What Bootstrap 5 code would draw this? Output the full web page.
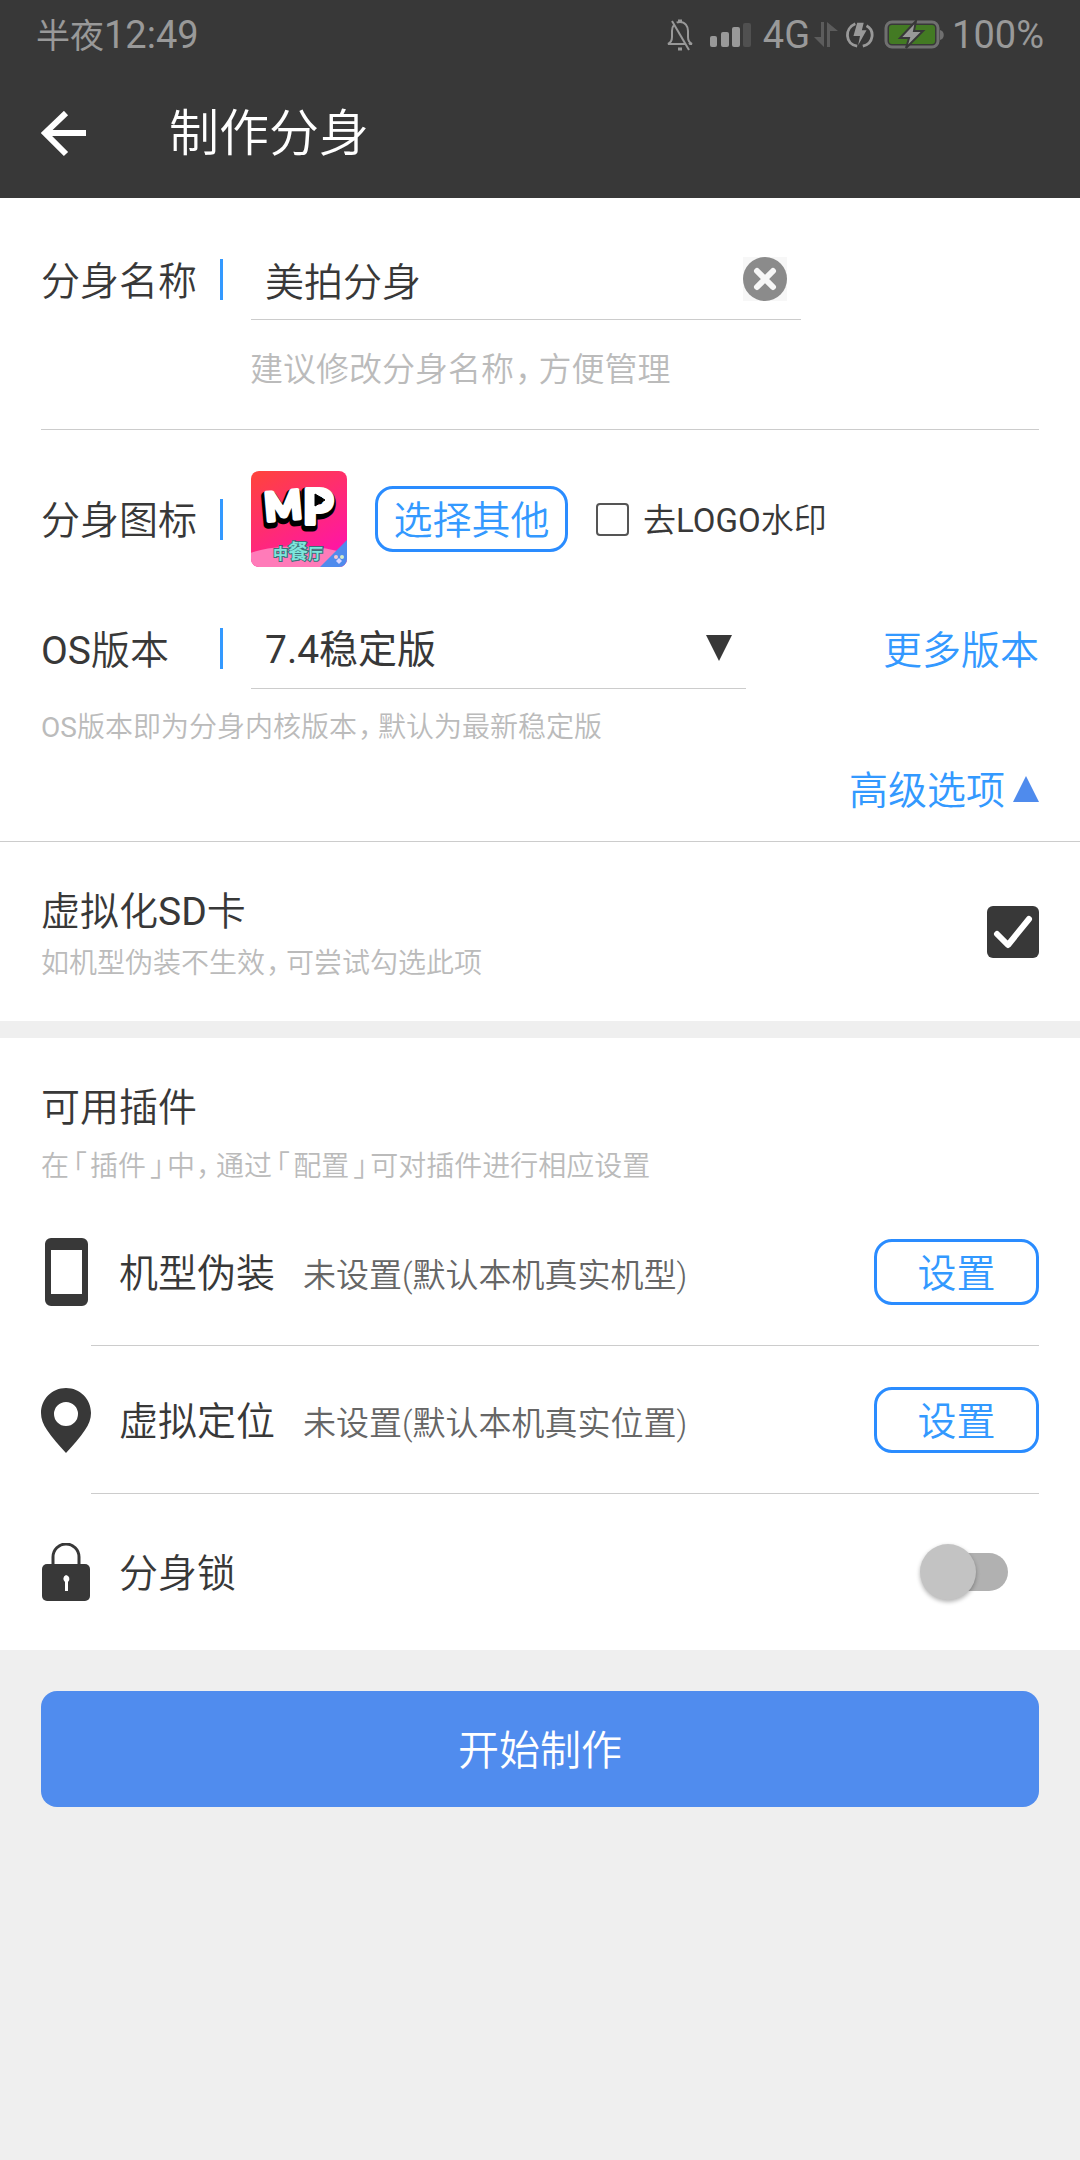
<!DOCTYPE html>
<html lang="zh-CN">
<head>
<meta charset="utf-8">
<meta name="viewport" content="width=device-width, initial-scale=1">
<title>制作分身</title>
<link href="https://cdn.jsdelivr.net/npm/bootstrap@5.3.0/dist/css/bootstrap.min.css" rel="stylesheet">
<style>
  :root { --ink: #383838; --line: #ccc; --muted-ink: #bbb; --sky: #3399ff; --edge: 41px; }
  body { background: #efefef; color: var(--ink); font-family: Roboto, "Noto Sans CJK SC", sans-serif; font-weight: 350; font-size: 39px; line-height: 46px; }
  svg { display: block; flex: none; }
  a { color: var(--sky); text-decoration: none; }
  .edge-x { padding-left: var(--edge); padding-right: var(--edge); }
  .lat { font-weight: 400; }

  .top-area { background: var(--ink); }
  .status-line { height: 70px; padding: 0 36px; color: #999; font-size: 38px; font-weight: 400; }
  .status-line .cjk { font-size: 34px; }
  .net-type { margin-left: 12px; }
  .app-bar { height: 128px; gap: 82px; }
  .app-bar h1 { font-size: 50px; font-weight: 350; line-height: 60px; color: #fff; }

  /* CJK glyphs ride high in a Roboto line box; row text is lowered to look centred */
  .row-text { padding-top: 4px; }
  .field-row { padding-top: var(--edge); }
  .field-label { flex: 0 0 182px; margin-right: 28px; display: flex; align-items: center; justify-content: space-between; }
  .field-label::after { content: ""; width: 3px; height: 41px; background: var(--sky); }
  .field-box { height: 81px; border-bottom: 1px solid var(--line); }
  .name-box { flex: 0 1 550px; padding-right: 14px; }
  .os-box { flex: 0 1 495px; }
  .field-box .form-control, .field-box .form-select { border: 0; border-radius: 0; box-shadow: none; background-color: transparent; color: var(--ink); font-size: 39px; line-height: 46px; padding: 0 14px 0 14px; height: 80px; }
  .field-box .form-control { font-weight: 350; }
  .field-box .form-select { padding-top: 4px; background-image: url("data:image/svg+xml,%3Csvg xmlns='http://www.w3.org/2000/svg' viewBox='0 0 26 26'%3E%3Cpath d='M0 0h26L13 26z' fill='%23383838'/%3E%3C/svg%3E"); background-size: 26px 26px; background-position: right 14px center; }
  .clear-btn { width: 44px; height: 44px; background: #f7f7f7; flex: none; }

  .hint { color: var(--muted-ink); font-size: 33px; line-height: 40px; margin-left: 209px; padding-top: 30px; padding-bottom: 39px; }
  .hint-sm { color: var(--muted-ink); font-size: 28px; line-height: 34px; }
  .comma, .brack { font-feature-settings: "halt"; }
  .comma { margin: 0 7px 0 1px; }
  .hint-sm .comma { margin-right: 6px; }
  .brack { margin: 0 3px 0 4px; }
  .rule { border-top: 1px solid var(--line); }

  .btn-line { --bs-btn-color: var(--sky); --bs-btn-border-color: #2a8cff; --bs-btn-hover-bg: #eaf4ff; --bs-btn-hover-color: var(--sky); --bs-btn-hover-border-color: #2a8cff; border-width: 3px; border-radius: 18px; height: 66px; padding: 4px 0 0; font-size: 39px; font-weight: 350; line-height: 46px; flex: none; }
  .btn-pick { width: 193px; margin: 0 28px; }
  .btn-set { width: 165px; }
  .form-check-input.box-sm, .form-check-input.box-lg { margin: 0; flex: none; }
  .form-check-input.box-sm { width: 33px; height: 33px; border: 2px solid #555; border-radius: 4px; }
  .pick-text { font-size: 33px; line-height: 40px; margin-left: 14px; padding-top: 4px; }
  .form-check-input.box-lg { width: 52px; height: 52px; border: 0; border-radius: 6px; }
  .form-check-input.box-lg:checked { background-color: var(--ink); background-size: 52px 52px; background-image: url("data:image/svg+xml,%3Csvg xmlns='http://www.w3.org/2000/svg' viewBox='0 0 52 52'%3E%3Cpath d='M10 28L21 39L42 13' fill='none' stroke='white' stroke-width='6' stroke-linecap='round' stroke-linejoin='round'/%3E%3C/svg%3E"); }

  .os-hint { padding-top: 22px; }
  .advanced { padding-top: 19px; padding-bottom: 27px; }
  .advanced svg { margin-left: 8px; }
  .sd-text { padding-top: 47px; padding-bottom: 40px; }
  .sd-hint { margin-top: 12px; }
  .band { height: 17px; background: #efefef; }
  .plug-head { padding-top: 47px; padding-bottom: 14px; }
  .plug-hint { margin-top: 19px; }
  .plug-icon { flex: 0 0 50px; }
  .plug-body { min-height: 148px; border-bottom: 1px solid var(--line); padding-left: 28px; }
  .plug-row:last-child .plug-body { min-height: 156px; border-bottom: 0; }
  .plug-note { font-size: 33px; line-height: 40px; color: #666; margin-left: 28px; padding-top: 8px; }
  .form-check-input.lock-switch { width: 78px; height: 38px; margin: 0 31px 0 0; border: 0; border-radius: 19px; background: #b1b1b1; flex: none; position: relative; }
  .lock-switch::before { content: ""; position: absolute; left: -10px; top: -9px; width: 56px; height: 56px; border-radius: 50%; background: #c3c3c3; box-shadow: 0 2px 4px rgba(0,0,0,.3); }
  .form-check-input.lock-switch:checked { background: #9cc4ff; }
  .lock-switch:checked::before { left: 32px; background: #508cee; }
  .start-area { padding-top: var(--edge); }
  .btn-start { --bs-btn-bg: #508cee; --bs-btn-color: #fff; --bs-btn-hover-bg: #437fe0; --bs-btn-hover-color: #fff; border: 0; border-radius: 16px; height: 116px; padding: 6px 0 0; font-size: 41px; font-weight: 350; }
</style>
</head>
<body>
<header class="top-area">
  <div class="status-line d-flex align-items-center justify-content-between">
    <div><span class="cjk">半夜</span>12:49</div>
    <div class="d-flex align-items-center">
      <svg width="28" height="32" viewBox="0 0 28 32" fill="none" stroke="#999" stroke-width="2" aria-hidden="true">
        <path d="M14 3c-5 0-8 4-8 9v6c0 4-2 6-4 7h24c-2-1-4-3-4-7v-6c0-5-3-9-8-9z"/><path d="M12 2h4M12 30h4" stroke-width="3"/><path d="M8 2l16 28" stroke="#383838" stroke-width="3"/><path d="M6 2l17 29"/>
      </svg>
      <svg class="ms-3" width="41" height="25" viewBox="0 0 41 25" fill="#999" aria-hidden="true">
        <rect y="13" width="7" height="11" rx="2"/><rect x="11" y="9" width="8" height="15" rx="2"/><rect x="22" y="4" width="8" height="20" rx="2"/><rect x="33" width="8" height="24" rx="2" fill="#505050"/>
      </svg>
      <span class="net-type">4G</span>
      <svg class="ms-1" width="24" height="26" viewBox="0 0 24 26" fill="#5c5c5c" aria-hidden="true">
        <path d="M7 0h3v25L0 15h7zM13 25h3V9h8L13 0z"/>
      </svg>
      <svg class="ms-2" width="28" height="28" viewBox="0 0 30 30" fill="none" stroke="#999" stroke-width="3" aria-hidden="true">
        <path d="M10 3C-2 8-1 25 12 27M18 27c12-3 13-17 4-22"/><path d="M12 2h7l-2 8h5L13 26l2-10H8z" fill="#999" stroke="none"/>
      </svg>
      <svg class="ms-2" width="62" height="30" viewBox="0 0 62 30" aria-hidden="true">
        <rect x="4" y="2" width="52" height="25" rx="6" fill="none" stroke="#707070" stroke-width="3"/><rect x="7" y="5" width="46" height="19" rx="3" fill="#437a23"/>
        <path d="M58 10c5 1 5 9 0 10z" fill="#707070"/>
        <path d="M34 1L18 18h9l-3 10 17-17h-9z" fill="#999" stroke="#383838" stroke-width="2"/>
      </svg>
      <span class="ms-2">100%</span>
    </div>
  </div>
  <nav class="app-bar edge-x d-flex align-items-center" aria-label="导航">
    <a href="#" aria-label="返回">
      <svg width="46" height="46" viewBox="0 0 46 46" fill="none" stroke="#fff" stroke-width="6"><path d="M25 2L4 22l21 21M4 22h41"/></svg>
    </a>
    <h1 class="m-0">制作分身</h1>
  </nav>
</header>

<main class="bg-white">
  <section class="edge-x">
    <div class="field-row d-flex align-items-center">
      <label class="field-label" for="clone-name"><span class="row-text">分身名称</span></label>
      <div class="field-box name-box d-flex align-items-center">
        <input class="form-control" type="text" id="clone-name" value="美拍分身">
        <button class="clear-btn btn p-0 border-0 rounded-0" type="button" aria-label="清除">
          <svg width="44" height="44" viewBox="0 0 44 44"><circle cx="22" cy="22" r="22" fill="#8b8b8b"/><path d="M14 14l16 16M30 14L14 30" stroke="#f7f7f7" stroke-width="6" stroke-linecap="round"/></svg>
        </button>
      </div>
    </div>
    <div class="hint">建议修改分身名称<span class="comma">，</span>方便管理</div>
    <div class="rule"></div>

    <div class="field-row d-flex align-items-center">
      <div class="field-label"><span class="row-text">分身图标</span></div>
      <svg width="96" height="96" viewBox="0 0 96 96" role="img" aria-label="美拍图标">
        <defs>
          <linearGradient id="tile" x1="0" y1="0" x2=".6" y2="1"><stop offset="0" stop-color="#ff443a"/><stop offset="1" stop-color="#ff16a4"/></linearGradient>
          <clipPath id="tile-shape"><rect width="96" height="96" rx="8"/></clipPath>
        </defs>
        <g clip-path="url(#tile-shape)">
          <rect width="96" height="96" fill="url(#tile)"/>
          <ellipse cx="46" cy="108" rx="76" ry="33" fill="#ff7bb9"/>
          <g font-family="Lato, sans-serif" font-weight="900" stroke-linejoin="round">
            <g fill="#000" stroke="#000" stroke-width="9">
              <text x="13" y="52" font-size="39" transform="rotate(-5 30 40)">M</text><text x="51" y="56" font-size="48">P</text>
            </g>
            <g fill="#fff" stroke="#fff" stroke-width="4">
              <text x="14" y="49" font-size="39" transform="rotate(-5 30 40)">M</text><text x="52" y="53" font-size="48">P</text>
            </g>
          </g>
          <path d="M64 23v12l10-6z" fill="#000" stroke="#000"/>
          <text x="22" y="88" font-family="Noto Sans CJK SC, sans-serif" font-weight="700" fill="#7ee6dc" stroke="#3c6f78" stroke-width="2" paint-order="stroke" font-size="15">中<tspan font-size="20">餐</tspan>厅</text>
          <path d="M96 69v27H69z" fill="#4f8bed"/>
          <g><circle cx="85" cy="86" r="2" fill="#f4c7cf"/><circle cx="91" cy="86" r="2" fill="#d5ecc4"/><path d="M88 87l3 3-3 3-3-3z" fill="#d9d6ff"/></g>
        </g>
      </svg>
      <button class="btn btn-line btn-pick" type="button">选择其他</button>
      <input class="form-check-input box-sm" type="checkbox" id="no-logo">
      <label class="pick-text" for="no-logo">去<span class="lat">LOGO</span>水印</label>
    </div>

    <div class="field-row d-flex align-items-center">
      <label class="field-label" for="os-version"><span class="row-text"><span class="lat">OS</span>版本</span></label>
      <div class="field-box os-box">
        <select class="form-select" id="os-version"><option selected>7.4稳定版</option></select>
      </div>
      <a class="row-text ms-auto" href="#">更多版本</a>
    </div>
    <div class="hint-sm os-hint"><span class="lat">OS</span>版本即为分身内核版本<span class="comma">，</span>默认为最新稳定版</div>
    <div class="advanced d-flex justify-content-end">
      <a class="d-flex align-items-center" href="#"><span class="row-text">高级选项</span><svg width="26" height="26" viewBox="0 0 26 26" aria-hidden="true"><path d="M13 0l13 26H0z" fill="#4f8bed"/></svg></a>
    </div>
  </section>

  <section class="rule edge-x d-flex align-items-center justify-content-between">
    <label class="sd-text" for="sd-card">
      <span class="d-block">虚拟化<span class="lat">SD</span>卡</span>
      <span class="hint-sm sd-hint d-block">如机型伪装不生效<span class="comma">，</span>可尝试勾选此项</span>
    </label>
    <input class="form-check-input box-lg" type="checkbox" id="sd-card" checked>
  </section>

  <div class="band"></div>

  <section class="edge-x">
    <div class="plug-head">
      <div>可用插件</div>
      <div class="hint-sm plug-hint">在<span class="brack">「</span>插件<span class="brack">」</span>中<span class="comma">，</span>通过<span class="brack">「</span>配置<span class="brack">」</span>可对插件进行相应设置</div>
    </div>
    <div>
      <div class="plug-row d-flex align-items-center">
        <div class="plug-icon">
          <svg width="50" height="68" viewBox="0 0 50 68" aria-hidden="true"><path fill="#383838" fill-rule="evenodd" d="M10 0h31a6 6 0 0 1 6 6v56a6 6 0 0 1-6 6H10a6 6 0 0 1-6-6V6a6 6 0 0 1 6-6zM10 12v44h31V12z"/></svg>
        </div>
        <div class="plug-body flex-grow-1 d-flex align-items-center">
          <span class="row-text">机型伪装</span><span class="plug-note">未设置(默认本机真实机型)</span>
          <button class="btn btn-line btn-set ms-auto" type="button">设置</button>
        </div>
      </div>
      <div class="plug-row d-flex align-items-center">
        <div class="plug-icon">
          <svg width="50" height="65" viewBox="0 0 50 65" aria-hidden="true"><path fill="#383838" fill-rule="evenodd" d="M25 0C11 0 0 11 0 25c0 6 2 11 6 17 5 8 12 15 19 23 7-8 14-15 19-23 4-6 6-11 6-17C50 11 39 0 25 0zM25 14a12 12 0 1 1 0 24 12 12 0 0 1 0-24z"/></svg>
        </div>
        <div class="plug-body flex-grow-1 d-flex align-items-center">
          <span class="row-text">虚拟定位</span><span class="plug-note">未设置(默认本机真实位置)</span>
          <button class="btn btn-line btn-set ms-auto" type="button">设置</button>
        </div>
      </div>
      <div class="plug-row d-flex align-items-center">
        <div class="plug-icon">
          <svg width="50" height="58" viewBox="0 0 50 58" aria-hidden="true"><path d="M12 22V14a13 13 0 0 1 26 0v8" fill="none" stroke="#383838" stroke-width="3"/><rect x="1" y="21" width="48" height="37" rx="5" fill="#383838"/><path d="M25 32a4 4 0 0 1 2 7v9h-3v-9a4 4 0 0 1 1-7z" fill="#fff"/></svg>
        </div>
        <div class="plug-body flex-grow-1 d-flex align-items-center">
          <label class="row-text" for="clone-lock">分身锁</label>
          <input class="form-check-input lock-switch ms-auto" type="checkbox" role="switch" id="clone-lock">
        </div>
      </div>
    </div>
  </section>
</main>

<footer class="start-area edge-x">
  <button class="btn btn-start w-100" type="button">开始制作</button>
</footer>
<script src="https://cdn.jsdelivr.net/npm/bootstrap@5.3.0/dist/js/bootstrap.bundle.min.js"></script>
</body>
</html>
